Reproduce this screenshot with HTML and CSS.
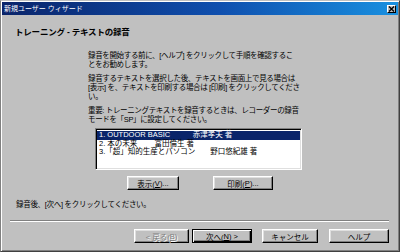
FILE: index.html
```html
<!DOCTYPE html>
<html>
  <head>
    <meta charset="UTF-8">
    <title>新規ユーザー ウィザード</title>
    <link rel="stylesheet" href="styles.css">
  </head>
  <body>
    <div class="window">
      <div class="titlebar">
        <span class="title">新規ユーザー ウィザード</span>
        <span class="close">
          <svg width="7" height="6" viewBox="0 0 7 6"><path d="M1 0.5 L6 5.5 M6 0.5 L1 5.5" stroke="#000" stroke-width="1.4"/></svg>
        </span>
      </div>

      <div class="content">
        <h1 class="heading">トレーニング - テキストの録音</h1>

        <div class="main">
          <p>録音を開始する前に、[ヘルプ] をクリックして手順を確認するこ<br>とをお勧めします。</p>
          <p>録音するテキストを選択した後、テキストを画面上で見る場合は<br>[表示] を、テキストを印刷する場合は [印刷] をクリックしてくださ<br>い。</p>
          <p>重要: トレーニングテキストを録音するときは、レコーダーの録音<br>モードを「SP」に設定してください。</p>

          <div class="listbox">
            <div class="item selected">1. OUTDOOR BASIC　　　赤津孝夫 著</div>
            <div class="item">2. 本の未来　　 富田倫生 著</div>
            <div class="item">3.「超」知的生産とパソコン　　野口悠紀雄 著</div>
          </div>

          <div class="listbuttons">
            <span class="btn btn-view">表示(<u>V</u>)...</span>
            <span class="btn btn-print">印刷(<u>P</u>)...</span>
          </div>
        </div>

        <p class="after">録音後、[次へ] をクリックしてください。</p>
      </div>

      <div class="separator"></div>

      <div class="footer">
        <span class="btn btn-back disabled">&lt; 戻る(<u>B</u>)</span>
        <span class="btn btn-next default">次へ(<u>N</u>) &gt;</span>
        <span class="btn btn-cancel">キャンセル</span>
        <span class="btn btn-help">ヘルプ</span>
      </div>
    </div>
  </body>
</html>
```

FILE: styles.css
```css
html, body { margin: 0; padding: 0; background: #c0c0c0; }
body { font-family: "Liberation Sans", "Noto Sans CJK JP", sans-serif; font-size: 7.5px; color: #000; }

.window { width: 400px; height: 252px; box-sizing: border-box; padding: 1px;
          border: 1px solid #404040; border-top-color: #c0c0c0; border-left-color: #808080;
          box-shadow: inset 1px 1px #fff, inset -1px -1px #808080;
          display: flex; flex-direction: column; background: #c0c0c0; }

.titlebar { height: 13px; margin: 0; display: flex; align-items: center; justify-content: space-between;
            background: linear-gradient(90deg, #0a246a 0%, #0f4fae 55%, #1890e0 100%); }
.title { color: #fff; font-size: 7px; line-height: 13px; padding-left: 2px; }
.close { width: 9px; height: 8px; margin-right: 2px; box-sizing: border-box; background: #c0c0c0;
         border: 1px solid; border-color: #fff #000 #000 #fff;
         display: flex; align-items: center; justify-content: center; }
.close svg { display: block; }

.content { padding: 0 13px; }
.heading { margin: 12px 0 0 0; font-size: 8.5px; line-height: 10px; font-weight: bold; letter-spacing: -0.2px; }

.main { margin-left: 73px; }
.main p { margin: 5px 0 0 0; line-height: 9px; white-space: nowrap; letter-spacing: -0.35px; }
.main p:first-child { margin-top: 14px; }

.listbox { width: 207px; height: 42px; margin-top: 4px; margin-left: 7px; box-sizing: border-box;
           background: #fff; padding: 2px 1px;
           border: 1px solid; border-color: #808080 #fff #fff #808080;
           box-shadow: inset 1px 1px #000, inset -1px -1px #dfdfdf; }
.item { height: 8.5px; line-height: 8.5px; padding-left: 2px; white-space: nowrap; }
.item.selected { background: #0a246a; color: #fff; }

.listbuttons { display: flex; margin-top: 6px; padding-left: 39px; }
.btn { height: 14px; box-sizing: border-box; display: flex; align-items: center; justify-content: center;
       background: #c0c0c0; border: 1px solid; border-color: #fff #000 #000 #fff;
       box-shadow: inset -1px -1px #808080, inset 1px 1px #dfdfdf; white-space: nowrap; }
.btn u { text-decoration: underline; }
.btn-view { width: 52px; }
.btn-print { width: 60px; margin-left: 34px; }

.after { margin: 11px 0 0 1px; line-height: 8px; letter-spacing: -0.3px; }

.separator { margin: 11px 9px 0 8px; height: 0; border-top: 1px solid #808080; border-bottom: 1px solid #fff; }

.footer { display: flex; justify-content: flex-end; margin-top: 7px; padding-right: 9px; }
.btn-back { width: 55px; }
.btn-next { width: 60px; margin-left: 3px; }
.btn-cancel { width: 56px; margin-left: 10px; }
.btn-help { width: 60px; margin-left: 11px; }

.btn.disabled { color: #808080; text-shadow: 1px 1px #fff; }
.btn.default { border: 1px solid #000;
               box-shadow: inset 1px 1px #fff, inset -1px -1px #000, inset -2px -2px #808080; }
```
